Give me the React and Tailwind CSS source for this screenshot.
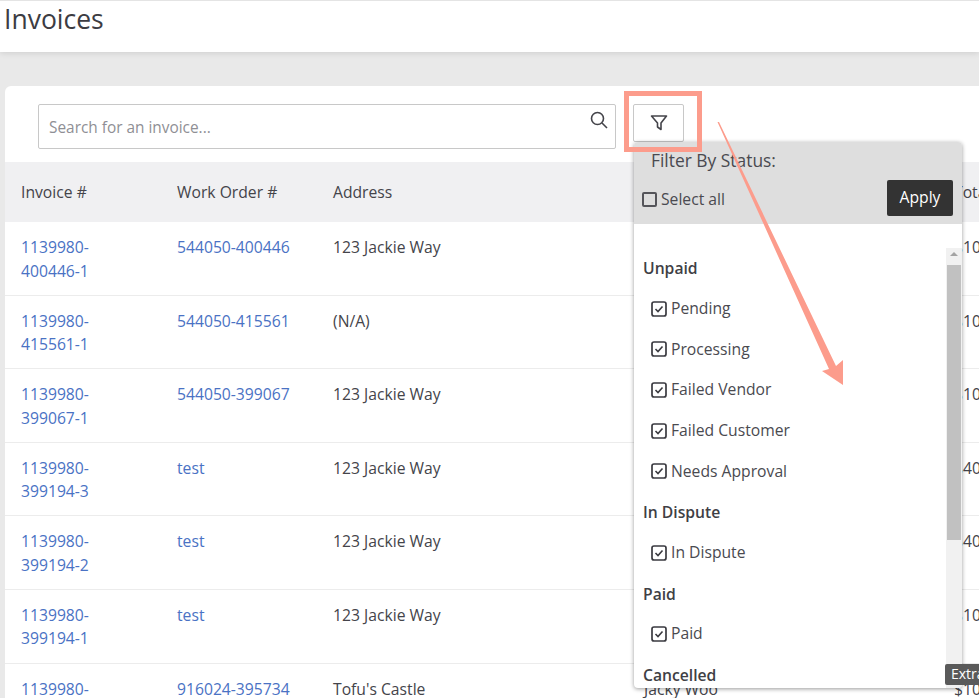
const rows = [
  { a: "1139980-", b: "400446-1", wo: "544050-400446", addr: "123 Jackie Way", total: "$100.00" },
  { a: "1139980-", b: "415561-1", wo: "544050-415561", addr: "(N/A)", total: "$100.00" },
  { a: "1139980-", b: "399067-1", wo: "544050-399067", addr: "123 Jackie Way", total: "$100.00" },
  { a: "1139980-", b: "399194-3", wo: "test", addr: "123 Jackie Way", total: "$40.00" },
  { a: "1139980-", b: "399194-2", wo: "test", addr: "123 Jackie Way", total: "$40.00" },
  { a: "1139980-", b: "399194-1", wo: "test", addr: "123 Jackie Way", total: "$100.00" },
  { a: "1139980-", b: "395734-1", wo: "916024-395734", addr: "Tofu's Castle", customer: "Jacky Woo", total: "$100.00" },
];

const groups = [
  { name: "Unpaid", items: ["Pending", "Processing", "Failed Vendor", "Failed Customer", "Needs Approval"] },
  { name: "In Dispute", items: ["In Dispute"] },
  { name: "Paid", items: ["Paid"] },
  { name: "Cancelled", items: [] },
];

function CheckIcon() {
  return (
    <svg width="16" height="16" viewBox="0 0 16 16" fill="none" stroke="#3a3a40" className="shrink-0">
      <rect x="1" y="1" width="14" height="14" rx="2" strokeWidth="1.7" />
      <path d="M4.5 8l2.5 2.5 4.5-5" strokeWidth="1.6" />
    </svg>
  );
}

function Dropdown() {
  return (
    <div className="absolute left-[634px] top-[142px] w-[328px] h-[546px] bg-white rounded overflow-hidden shadow-[0_1px_4px_rgba(0,0,0,0.4)] text-[#4a4a50]">
      <div className="h-[82px] bg-[#dedede] pl-[17px] pr-[9px]">
        <div className="pt-[6px] leading-[24px] text-[17.4px]">Filter By Status:</div>
        <div className="flex items-center justify-between -ml-[9px] mt-[8px]">
          <div className="flex items-center gap-[4px] mt-[4px]">
            <span className="w-[15px] h-[15px] border-2 border-[#55555a] rounded-[2px]" />
            <span>Select all</span>
          </div>
          <button className="w-[66px] h-[36px] bg-[#333333] text-white rounded-[2px]">Apply</button>
        </div>
      </div>
      <div className="pl-[9px] pt-[32px]">
        {groups.map((g) => (
          <div key={g.name}>
            <div className="font-semibold leading-[24px] h-[24px] mb-[16.7px] text-[#3f3f45]">{g.name}</div>
            {g.items.map((it) => (
              <div key={it} className="flex items-center gap-[4px] pl-[8px] h-[24px] mb-[16.7px]">
                <CheckIcon />
                <span>{it}</span>
              </div>
            ))}
          </div>
        ))}
      </div>
      <div className="absolute right-0 top-[106px] bottom-0 w-[16px] bg-[#f1f1f1]">
        <div className="mx-auto mt-[4px] w-0 h-0 border-x-[4px] border-x-transparent border-b-[4px] border-b-[#a3a3a3]" />
        <div className="mt-[9px] ml-[1px] w-[14px] h-[275px] bg-[#c1c1c1]" />
      </div>
    </div>
  );
}

export default function App() {
  return (
    <div className="relative w-[979px] h-[698px] overflow-hidden bg-[#e9e9e9] text-[15.7px] text-[#44444a] font-['Open_Sans','Noto_Sans',sans-serif]">
      <div className="h-[52px] bg-white border-t border-[#e4e4e4] shadow-[0_1px_6px_rgba(0,0,0,0.12)]">
        <h1 className="pl-[4px] text-[26.5px] leading-[36px] text-[#3c3c42]">Invoices</h1>
      </div>

      <div className="mt-[34px] ml-[5px] w-[1100px] bg-white rounded-tl-md">
        <div className="h-[76px] pt-[18px] pl-[33px] flex items-start">
          <div className="w-[578px] h-[45px] border border-[#c8c8c8] rounded-[2px] flex items-start justify-between pl-[10px] pr-[6px]">
            <span className="mt-[11px] text-[15.4px] text-[#8f8f95] leading-[24px]">Search for an invoice...</span>
            <svg width="20" height="20" viewBox="0 0 20 20" fill="none" stroke="#44444a" strokeWidth="1.6" className="mt-[5px]">
              <circle cx="8.5" cy="8.5" r="6" />
              <path d="M13 13l5 5" />
            </svg>
          </div>
          <div className="ml-[17px] w-[51px] h-[38px] border border-[#c8c8c8] rounded-[2px] flex items-center justify-center">
            <svg width="18" height="18" viewBox="0 0 18 18" fill="none" stroke="#44444a" strokeWidth="1.6" strokeLinejoin="round">
              <path d="M1.5 2h15L11 9v6.5L7.5 13V9z" />
            </svg>
          </div>
        </div>

        <div className="h-[60px] bg-[#f0f0f2] pl-[16px] pt-[1px] grid grid-cols-[156px_156px_311px_310px_100px] items-center">
          <div>Invoice #</div>
          <div>Work Order #</div>
          <div>Address</div>
          <div>Customer</div>
          <div>Total</div>
        </div>

        {rows.map((r) => (
          <div key={r.b} className="h-[73.6px] border-b border-[#ececec] pl-[16px] pt-[14px] leading-[23.5px] grid grid-cols-[156px_156px_311px_310px_100px] items-start">
            <a className="text-[#4a72c4]">{r.a}<br />{r.b}</a>
            <a className="text-[#4a72c4]">{r.wo}</a>
            <div>{r.addr}</div>
            <div>{r.customer}</div>
            <div>{r.total}</div>
          </div>
        ))}
      </div>

      <Dropdown />

      {/* annotation drawn on the screenshot */}
      <div className="absolute left-[624px] top-[91px] w-[78px] h-[61px] border-[5px] border-[#fc9c8c]" />
      <svg className="absolute left-0 top-0 pointer-events-none" width="979" height="698" viewBox="0 0 979 698">
        <path d="M717.5 122L719 122L836 366L843 360L843 385L822 371L829 369Z" fill="#fc9c8c" />
      </svg>

      <div className="absolute left-[945px] top-[664px] w-[60px] h-[21px] pl-[6px] bg-[#5a5a5a] rounded-[2px] text-white text-[14px] leading-[20px]">Extra</div>
    </div>
  );
}
